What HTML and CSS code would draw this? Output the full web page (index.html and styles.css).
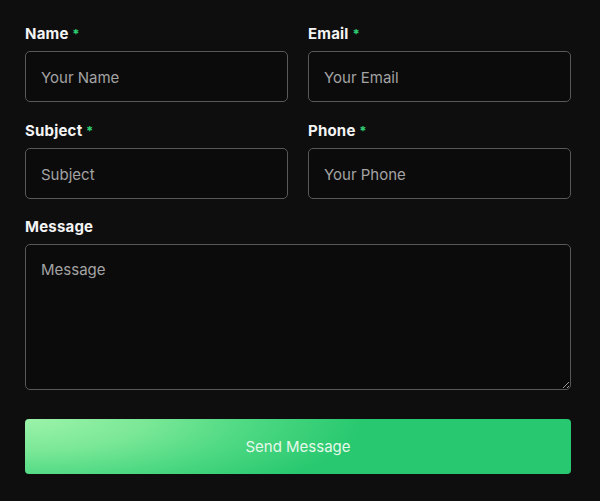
FILE: index.html
```html
<!DOCTYPE html>
<html lang="en">
<head>
<meta charset="utf-8">
<link rel="stylesheet" href="styles.css">
</head>
<body>
<form class="form">
  <div class="row">
    <div class="field">
      <label class="label">Name <span class="req">*</span></label>
      <input class="input" type="text" placeholder="Your Name">
    </div>
    <div class="field">
      <label class="label">Email <span class="req">*</span></label>
      <input class="input" type="email" placeholder="Your Email">
    </div>
  </div>
  <div class="row">
    <div class="field">
      <label class="label">Subject <span class="req">*</span></label>
      <input class="input" type="text" placeholder="Subject">
    </div>
    <div class="field">
      <label class="label">Phone <span class="req">*</span></label>
      <input class="input" type="tel" placeholder="Your Phone">
    </div>
  </div>
  <div class="field field-msg">
    <label class="label">Message</label>
    <textarea class="input textarea" placeholder="Message"></textarea>
  </div>
  <button class="btn" type="button">Send Message</button>
</form>
</body>
</html>
```
FILE: styles.css
```css
* { box-sizing: border-box; }
html, body { margin: 0; padding: 0; background: #0e0e0f; }
body { font-family: "Inter", "Liberation Sans", sans-serif; color: #f2f2f2; }
.form {
  width: 546px;
  margin-left: 25px;
  padding-top: 22px;
  display: flex;
  flex-direction: column;
  gap: 17px;
}
.row { display: grid; grid-template-columns: minmax(0, 1fr) minmax(0, 1fr); gap: 20px; }
.field { display: flex; flex-direction: column; gap: 6px; min-width: 0; }
.field-msg { margin-top: -1px; }
.label { font-size: 15px; font-weight: 700; line-height: 22px; padding-top: 1px; color: #f4f4f4; letter-spacing: 0.2px; }
.req { color: #2fcf73; font-size: 13px; }
.input {
  width: 100%;
  height: 51px;
  background: #0b0b0c;
  border: 1px solid #58585a;
  border-radius: 5px;
  padding: 1px 15px 0;
  font-family: inherit;
  font-size: 15px;
  color: #e0e0e0;
  outline: none;
}
.input::placeholder { color: #a3a3a3; }
.textarea { height: 146px; padding: 15px 15px; resize: vertical; line-height: 20px; }
.btn {
  margin-top: 12px;
  height: 55px;
  border: none;
  border-radius: 4px;
  background:
    radial-gradient(ellipse 340px 90px at 0% 0%, #9cf3aa 0%, #7be897 35%, #4fd983 65%, rgba(39, 200, 111, 0) 100%),
    #27c86f;
  color: #e6f8ea;
  font-family: inherit;
  font-size: 15px;
  font-weight: 400;
  cursor: pointer;
}
```
